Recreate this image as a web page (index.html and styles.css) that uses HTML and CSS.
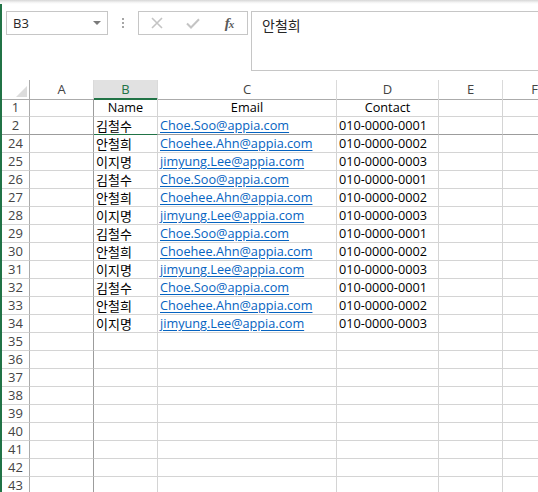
FILE: index.html
```html
<!DOCTYPE html>
<html>
<head>
<meta charset="utf-8">
<link rel="stylesheet" href="styles.css">
</head>
<body>
<div class="shadow"></div>
<div class="app">
  <div class="fbar">
    <div class="namebox"><span class="nbtext">B3</span><span class="caret"></span></div>
    <div class="grip"><i></i><i></i><i></i></div>
    <div class="btns">
      <div class="btn"><svg width="12" height="12" viewBox="0 0 12 12"><path d="M1 1L11 11M11 1L1 11" stroke="#c4c4c4" stroke-width="1.6" fill="none"/></svg></div>
      <div class="btn"><svg width="14" height="11" viewBox="0 0 14 11"><path d="M1 5.5L5 9.5L13 1.2" stroke="#c4c4c4" stroke-width="2" fill="none"/></svg></div>
      <div class="btn fx"><span>f</span><span class="x">x</span></div>
    </div>
    <div class="finput">안철희</div>
  </div>
  <div class="sheet">
    <div class="row hdr">
      <div class="c rh corner"><svg width="11" height="11" viewBox="0 0 11 11"><path d="M11 0L11 11L0 11Z" fill="#dcdcdc"/></svg></div>
      <div class="c ch">A</div>
      <div class="c ch sel">B</div>
      <div class="c ch">C</div>
      <div class="c ch">D</div>
      <div class="c ch">E</div>
      <div class="c ch">F</div>
    </div>
    <div class="row"><div class="c rh">1</div><div class="c ca"></div><div class="c ctr">Name</div><div class="c ctr">Email</div><div class="c ctr">Contact</div><div class="c"></div><div class="c"></div></div>
    <div class="row hid"><div class="c rh">2</div><div class="c ca"></div><div class="c ko gb">김철수</div><div class="c"><span class="lnk">Choe.Soo@appia.com</span></div><div class="c">010-0000-0001</div><div class="c"></div><div class="c"></div></div>
    <div class="row"><div class="c rh">24</div><div class="c ca"></div><div class="c ko">안철희</div><div class="c"><span class="lnk">Choehee.Ahn@appia.com</span></div><div class="c">010-0000-0002</div><div class="c"></div><div class="c"></div></div>
    <div class="row"><div class="c rh">25</div><div class="c ca"></div><div class="c ko">이지명</div><div class="c"><span class="lnk">jimyung.Lee@appia.com</span></div><div class="c">010-0000-0003</div><div class="c"></div><div class="c"></div></div>
    <div class="row"><div class="c rh">26</div><div class="c ca"></div><div class="c ko">김철수</div><div class="c"><span class="lnk">Choe.Soo@appia.com</span></div><div class="c">010-0000-0001</div><div class="c"></div><div class="c"></div></div>
    <div class="row"><div class="c rh">27</div><div class="c ca"></div><div class="c ko">안철희</div><div class="c"><span class="lnk">Choehee.Ahn@appia.com</span></div><div class="c">010-0000-0002</div><div class="c"></div><div class="c"></div></div>
    <div class="row"><div class="c rh">28</div><div class="c ca"></div><div class="c ko">이지명</div><div class="c"><span class="lnk">jimyung.Lee@appia.com</span></div><div class="c">010-0000-0003</div><div class="c"></div><div class="c"></div></div>
    <div class="row"><div class="c rh">29</div><div class="c ca"></div><div class="c ko">김철수</div><div class="c"><span class="lnk">Choe.Soo@appia.com</span></div><div class="c">010-0000-0001</div><div class="c"></div><div class="c"></div></div>
    <div class="row"><div class="c rh">30</div><div class="c ca"></div><div class="c ko">안철희</div><div class="c"><span class="lnk">Choehee.Ahn@appia.com</span></div><div class="c">010-0000-0002</div><div class="c"></div><div class="c"></div></div>
    <div class="row"><div class="c rh">31</div><div class="c ca"></div><div class="c ko">이지명</div><div class="c"><span class="lnk">jimyung.Lee@appia.com</span></div><div class="c">010-0000-0003</div><div class="c"></div><div class="c"></div></div>
    <div class="row"><div class="c rh">32</div><div class="c ca"></div><div class="c ko">김철수</div><div class="c"><span class="lnk">Choe.Soo@appia.com</span></div><div class="c">010-0000-0001</div><div class="c"></div><div class="c"></div></div>
    <div class="row"><div class="c rh">33</div><div class="c ca"></div><div class="c ko">안철희</div><div class="c"><span class="lnk">Choehee.Ahn@appia.com</span></div><div class="c">010-0000-0002</div><div class="c"></div><div class="c"></div></div>
    <div class="row"><div class="c rh">34</div><div class="c ca"></div><div class="c ko">이지명</div><div class="c"><span class="lnk">jimyung.Lee@appia.com</span></div><div class="c">010-0000-0003</div><div class="c"></div><div class="c"></div></div>
    <div class="row"><div class="c rh">35</div><div class="c ca"></div><div class="c"></div><div class="c"></div><div class="c"></div><div class="c"></div><div class="c"></div></div>
    <div class="row"><div class="c rh">36</div><div class="c ca"></div><div class="c"></div><div class="c"></div><div class="c"></div><div class="c"></div><div class="c"></div></div>
    <div class="row"><div class="c rh">37</div><div class="c ca"></div><div class="c"></div><div class="c"></div><div class="c"></div><div class="c"></div><div class="c"></div></div>
    <div class="row"><div class="c rh">38</div><div class="c ca"></div><div class="c"></div><div class="c"></div><div class="c"></div><div class="c"></div><div class="c"></div></div>
    <div class="row"><div class="c rh">39</div><div class="c ca"></div><div class="c"></div><div class="c"></div><div class="c"></div><div class="c"></div><div class="c"></div></div>
    <div class="row"><div class="c rh">40</div><div class="c ca"></div><div class="c"></div><div class="c"></div><div class="c"></div><div class="c"></div><div class="c"></div></div>
    <div class="row"><div class="c rh">41</div><div class="c ca"></div><div class="c"></div><div class="c"></div><div class="c"></div><div class="c"></div><div class="c"></div></div>
    <div class="row"><div class="c rh">42</div><div class="c ca"></div><div class="c"></div><div class="c"></div><div class="c"></div><div class="c"></div><div class="c"></div></div>
    <div class="row"><div class="c rh">43</div><div class="c ca"></div><div class="c"></div><div class="c"></div><div class="c"></div><div class="c"></div><div class="c"></div></div>
  </div>
</div>
</body>
</html>
```
FILE: styles.css
```css
html, body {
  margin: 0;
  padding: 0;
  background: #fff;
  overflow: hidden;
  width: 538px;
  height: 492px;
}
body {
  font-family: "Open Sans", "Noto Sans CJK KR", sans-serif;
  color: #000;
}
.shadow {
  height: 4px;
  background: linear-gradient(#d6d6d6, #f4f4f4 60%, #fff);
}
.app {
  border-left: 2px solid #217346;
  height: 488px;
  overflow: hidden;
}
.fbar {
  display: flex;
  align-items: flex-start;
  height: 76px;
  padding-top: 7px;
  box-sizing: border-box;
}
.fbar > * {
  flex: none;
}
.namebox {
  margin-left: 4px;
  width: 102px;
  height: 24px;
  box-sizing: border-box;
  border: 1px solid #c6c6c6;
  display: flex;
  align-items: center;
  justify-content: space-between;
  padding: 0 6px 0 6px;
  font-size: 13px;
  color: #262626;
}
.caret {
  width: 0;
  height: 0;
  border-left: 4px solid transparent;
  border-right: 4px solid transparent;
  border-top: 4px solid #7a7a7a;
}
.grip {
  width: 30px;
  height: 24px;
  display: flex;
  flex-direction: column;
  align-items: center;
  justify-content: center;
  gap: 2px;
}
.grip i {
  display: block;
  width: 2px;
  height: 2px;
  background: #a6a6a6;
}
.btns {
  width: 110px;
  height: 24px;
  box-sizing: border-box;
  border: 1px solid #c6c6c6;
  display: flex;
}
.btn {
  flex: 1;
  display: flex;
  align-items: center;
  justify-content: center;
}
.fx {
  font-family: "Liberation Serif", serif;
  font-style: italic;
  font-weight: bold;
  font-size: 15px;
  color: #5a5a5a;
  letter-spacing: -1px;
}
.fx .x {
  font-size: 11px;
  position: relative;
  top: 1px;
}
.finput {
  margin-left: 3px;
  width: 320px;
  height: 60px;
  box-sizing: border-box;
  border: 1px solid #c6c6c6;
  padding: 3px 0 0 10px;
  font-family: "Noto Sans CJK KR", sans-serif;
  font-size: 14px;
  line-height: 20px;
  color: #262626;
}
.sheet {
  width: 600px;
}
.row {
  display: grid;
  grid-template-columns: 28px 64px 64px 179px 102px 64px 64px;
  height: 18px;
}
.c {
  box-sizing: border-box;
  border-right: 1px solid #d4d4d4;
  border-bottom: 1px solid #d4d4d4;
  white-space: nowrap;
  font-size: 12.7px;
  line-height: 17px;
  padding-left: 2px;
  overflow: visible;
}
.hdr {
  height: 19px;
}
.hdr .c {
  border-bottom-color: #ababab;
  border-right-color: #dadada;
}
.ch {
  text-align: center;
  padding-left: 0;
  font-size: 13px;
  line-height: 18px;
  color: #444;
}
.ch.sel {
  background: #e1e1e1;
  border-bottom: 2px solid #217346;
  color: #217346;
}
.rh {
  text-align: center;
  padding-left: 0;
  font-size: 13px;
  color: #444;
  border-right-color: #ababab;
}
.hdr .rh {
  border-right-color: #ababab;
}
.corner {
  display: flex;
  align-items: flex-end;
  justify-content: flex-end;
  padding: 0 2px 2px 0;
}
.ca {
  border-right-color: #9c9c9c;
}
.ctr {
  text-align: center;
  padding-left: 0;
}
.ko {
  font-family: "Noto Sans CJK KR", sans-serif;
  font-size: 13px;
}
.lnk {
  color: #0563c1;
  text-decoration: underline;
  text-underline-offset: 2px;
}
.hid .c {
  border-bottom-color: #9c9c9c;
}
.hid .gb {
  border-bottom-color: #217346;
}
```
